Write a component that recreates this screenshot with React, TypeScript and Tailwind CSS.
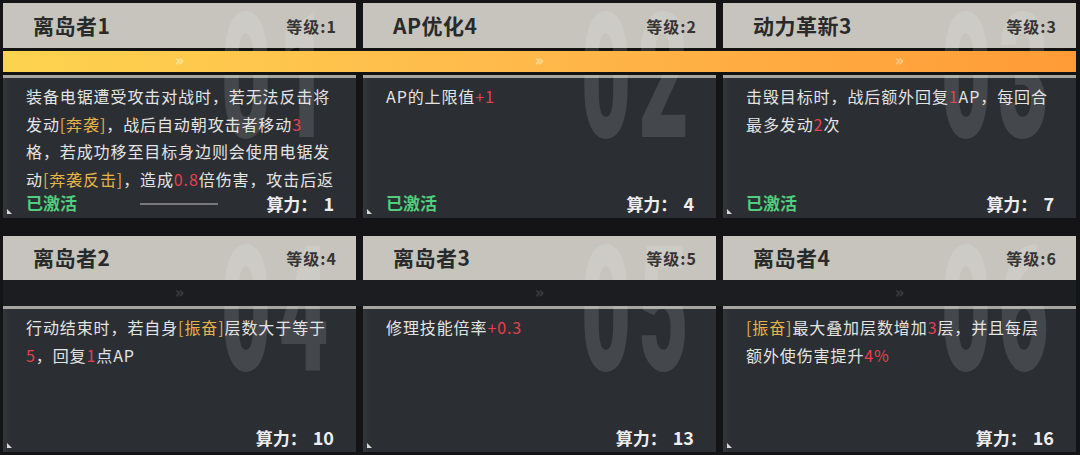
import React from "react";

type Seg = { t: string; c?: "r" | "y" };
type Card = {
  title: string;
  level: string;
  num: string;
  lines: Seg[][];
  active: boolean;
  power: string;
  scroll?: boolean;
};

const row1: Card[] = [
  {
    title: "离岛者1",
    level: "1",
    num: "01",
    active: true,
    power: "1",
    scroll: true,
    lines: [
      [{ t: "装备电锯遭受攻击对战时，若无法反击将" }],
      [{ t: "发动" }, { t: "[奔袭]", c: "y" }, { t: "，战后自动朝攻击者移动" }, { t: "3", c: "r" }],
      [{ t: "格，若成功移至目标身边则会使用电锯发" }],
      [{ t: "动" }, { t: "[奔袭反击]", c: "y" }, { t: "，造成" }, { t: "0.8", c: "r" }, { t: "倍伤害，攻击后返" }],
      [{ t: "回原位" }],
    ],
  },
  {
    title: "AP优化4",
    level: "2",
    num: "02",
    active: true,
    power: "4",
    lines: [[{ t: "AP的上限值" }, { t: "+1", c: "r" }]],
  },
  {
    title: "动力革新3",
    level: "3",
    num: "03",
    active: true,
    power: "7",
    lines: [
      [{ t: "击毁目标时，战后额外回复" }, { t: "1", c: "r" }, { t: "AP，每回合" }],
      [{ t: "最多发动" }, { t: "2", c: "r" }, { t: "次" }],
    ],
  },
];

const row2: Card[] = [
  {
    title: "离岛者2",
    level: "4",
    num: "04",
    active: false,
    power: "10",
    lines: [
      [{ t: "行动结束时，若自身" }, { t: "[振奋]", c: "y" }, { t: "层数大于等于" }],
      [{ t: "5", c: "r" }, { t: "，回复" }, { t: "1", c: "r" }, { t: "点AP" }],
    ],
  },
  {
    title: "离岛者3",
    level: "5",
    num: "05",
    active: false,
    power: "13",
    lines: [[{ t: "修理技能倍率" }, { t: "+0.3", c: "r" }]],
  },
  {
    title: "离岛者4",
    level: "6",
    num: "06",
    active: false,
    power: "16",
    lines: [
      [{ t: "[振奋]", c: "y" }, { t: "最大叠加层数增加" }, { t: "3", c: "r" }, { t: "层，并且每层" }],
      [{ t: "额外使伤害提升" }, { t: "4%", c: "r" }],
    ],
  },
];

const cjk = { fontFamily: '"Noto Sans CJK SC", "Noto Sans", sans-serif' };

function Line({ segs }: { segs: Seg[] }) {
  return (
    <div className="whitespace-nowrap">
      {segs.map((s, i) => (
        <span
          key={i}
          className={
            s.c === "r"
              ? "text-[#e5404d]"
              : s.c === "y"
              ? "text-[#e6b548]"
              : "text-[#e4e4e4]"
          }
        >
          {s.t}
        </span>
      ))}
    </div>
  );
}

function CardView({ card, top }: { card: Card; top: boolean }) {
  return (
    <div className="relative flex flex-col overflow-hidden" style={cjk}>
      <div
        className={`${top ? "h-[45px]" : "h-[44px]"} bg-[#c6c4bd] flex items-center justify-between pl-[30px] pr-[19px]`}
      >
        <span className="relative z-20 text-[21px] font-bold text-[#2a2a2a] tracking-[0.5px]">
          {card.title}
        </span>
        <span className="relative z-20 text-[16px] font-bold text-[#353535] tracking-[1px]">
          等级:{card.level}
        </span>
      </div>
      {top ? (
        <>
          <div className="h-[3px] bg-[#131314]" />
          <div className="h-[21px]" />
          <div className="h-[3px] bg-[#1a1b1e]" />
          <div className="h-[3px] bg-[#a6a5a0]" />
        </>
      ) : (
        <>
          <div className="h-[26px]" />
          <div className="h-[3px] bg-[#a6a5a0]" />
        </>
      )}
      <div
        className={`${top ? "h-[140px]" : "h-[143px]"} relative flex flex-col bg-gradient-to-r from-[#33363b] from-0% via-[#2b2e33] via-[2%] to-[#2b2e33]`}
      >
        <div className="relative z-20 flex-1 overflow-hidden pl-[23px] pt-[5px] text-[16px] leading-[27.7px] tracking-[0.9px]">
          {card.lines.map((l, i) => (
            <Line key={i} segs={l} />
          ))}
        </div>
        <div className="relative z-20 h-[24px] pb-[6px] flex items-center justify-between pl-[23px] pr-[22px]">
          <span className="text-[17px] font-bold text-[#4fcf7b]">
            {card.active ? "已激活" : ""}
          </span>
          <span className="text-[17px] font-bold text-[#ededed]">
            算力：<span className="inline-block ml-[6px] text-[18px]">{card.power}</span>
          </span>
          {card.scroll && (
            <div className="absolute left-[137px] top-[9px] w-[78px] h-[2px] bg-[#77787b]" />
          )}
        </div>
        <svg className="absolute left-[4px] bottom-[4px]" width="5" height="5" viewBox="0 0 5 5">
          <polygon points="0,0 0,5 5,5" fill="#d8d8d8" />
        </svg>
      </div>
      <div
        className="pointer-events-none absolute right-[20px] top-[-12px] z-10 text-[174px] font-black leading-none text-white/[0.12] origin-right scale-x-[0.5] tracking-[14px]"
        style={{ fontFamily: "Roboto, sans-serif" }}
      >
        {card.num}
      </div>
    </div>
  );
}

function Chevrons({ className }: { className: string }) {
  return (
    <span
      className={`text-[15px] font-bold leading-none ${className}`}
      style={{ fontFamily: '"DejaVu Sans", sans-serif' }}
    >
      »
    </span>
  );
}

export default function App() {
  return (
    <div className="w-[1080px] h-[455px] bg-[#141417] pt-[3px] pl-[3px] pr-[4px] flex flex-col overflow-hidden">
      <div className="relative grid grid-cols-3 gap-x-[7px]">
        {row1.map((c, i) => (
          <CardView key={i} card={c} top />
        ))}
        <div className="absolute left-0 right-0 top-[48px] z-30 h-[24px] border-b-[3px] border-[#131314] bg-gradient-to-r from-[#fdd34f] via-[#ffb84a] to-[#ff9b36] grid grid-cols-3 gap-x-[7px] items-center">
          <div className="flex justify-center">
            <Chevrons className="text-[#fff1b8]/70" />
          </div>
          <div className="flex justify-center">
            <Chevrons className="text-[#ffe6b0]/70" />
          </div>
          <div className="flex justify-center">
            <Chevrons className="text-[#ffd8a8]/70" />
          </div>
        </div>
      </div>
      <div className="relative mt-[18px] grid grid-cols-3 gap-x-[7px]">
        {row2.map((c, i) => (
          <CardView key={i} card={c} top={false} />
        ))}
        <div className="absolute left-0 right-0 top-[44px] z-30 h-[26px] bg-[#1c1d20] grid grid-cols-3 gap-x-[7px] items-center">
          <div className="flex justify-center">
            <Chevrons className="text-[#3a3c40]" />
          </div>
          <div className="flex justify-center">
            <Chevrons className="text-[#3a3c40]" />
          </div>
          <div className="flex justify-center">
            <Chevrons className="text-[#3a3c40]" />
          </div>
        </div>
      </div>
    </div>
  );
}
